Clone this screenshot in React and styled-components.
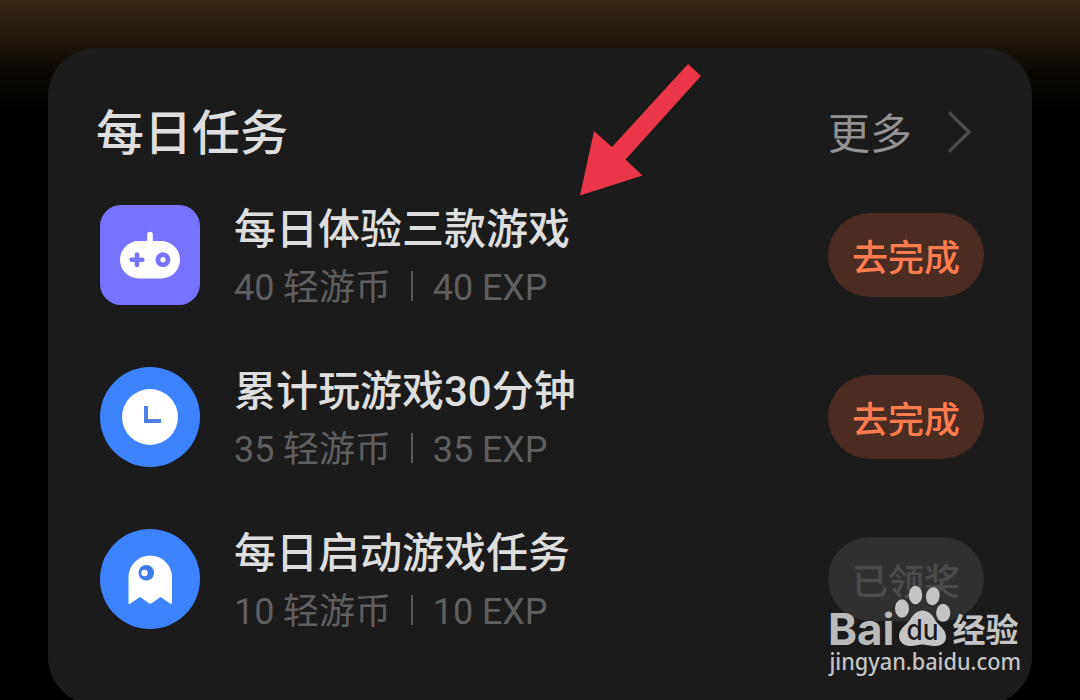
import styled, { createGlobalStyle } from "styled-components";

const tasks = [
  { icon: "gamepad", title: "每日体验三款游戏", coins: 40, exp: 40, done: false },
  { icon: "clock", title: "累计玩游戏30分钟", coins: 35, exp: 35, done: false },
  { icon: "ghost", title: "每日启动游戏任务", coins: 10, exp: 10, done: true },
];

const GamepadIcon = () => (
  <svg width="100" height="100" viewBox="0 0 100 100">
    <rect width="100" height="100" rx="21" fill="#7873ff" />
    <path d="M50 29.5V40" stroke="#fff" strokeWidth="5.6" strokeLinecap="round" />
    <rect x="20" y="36" width="60" height="37.5" rx="18.75" fill="#fff" />
    <path d="M37 49.5V60M31.7 54.7H42.3" stroke="#7873ff" strokeWidth="4.6" strokeLinecap="round" />
    <circle cx="63" cy="54.7" r="5" fill="none" stroke="#7873ff" strokeWidth="4.8" />
  </svg>
);

const ClockIcon = () => (
  <svg width="100" height="100" viewBox="0 0 100 100">
    <circle cx="50" cy="50" r="50" fill="#3d82ff" />
    <circle cx="50" cy="50" r="28" fill="#fff" />
    <path d="M46 39V54H61" fill="none" stroke="#4c80e2" strokeWidth="4" />
  </svg>
);

const GhostIcon = () => (
  <svg width="100" height="100" viewBox="0 0 100 100">
    <circle cx="50" cy="50" r="50" fill="#3d82ff" />
    <path
      d="M28.5 47A21.8 22 0 0 1 72 47V74Q72 75.5 70.5 74.7L60.5 68L52 74Q50.3 75 48.6 74L40 68L30 74.7Q28.5 75.5 28.5 74Z"
      fill="#fff"
    />
    <circle cx="46.3" cy="43.8" r="7.8" fill="#3f7ce8" />
    <circle cx="44.5" cy="44" r="3.2" fill="#fff" />
  </svg>
);

const icons = { gamepad: GamepadIcon, clock: ClockIcon, ghost: GhostIcon };

const Task = ({ task }) => {
  const Icon = icons[task.icon];
  return (
    <Row>
      <Icon />
      <Info>
        <TaskTitle>{task.title}</TaskTitle>
        <Reward>
          <Amount>{task.coins} 轻游币</Amount>
          <Divider />
          <Amount>{task.exp} EXP</Amount>
        </Reward>
      </Info>
      <ActionButton $done={task.done}>{task.done ? "已领奖" : "去完成"}</ActionButton>
    </Row>
  );
};

const App = () => {
  return (
    <Page>
      <GlobalStyle />
      <Card>
        <Header>
          <Heading>每日任务</Heading>
          <More>
            <MoreText>更多</MoreText>
            <svg width="26" height="42" viewBox="0 0 26 42">
              <path d="M2 1.5L22 21L2 40.5" fill="none" stroke="#4c4c4c" strokeWidth="3.4" />
            </svg>
          </More>
        </Header>
        <List>
          {tasks.map((task) => (
            <Task key={task.title} task={task} />
          ))}
        </List>
      </Card>

      <Arrow width="124" height="134" viewBox="0 0 124 134">
        <path d="M0 131.5L14 67L32 83L108 0L121 12L45.5 95.5L62.5 111.5Z" fill="#eb3549" />
      </Arrow>

      <Watermark width="220" height="115" viewBox="0 0 220 115">
        <g fill="#c4c4c4">
          <WordMark x="3" y="64.5" textLength="66.5" lengthAdjust="spacingAndGlyphs">Bai</WordMark>
          <ellipse cx="77" cy="28.5" rx="7" ry="9.3" />
          <ellipse cx="90.5" cy="15" rx="6.7" ry="9.2" />
          <ellipse cx="107.8" cy="16.2" rx="6.8" ry="9" transform="rotate(10 107.8 16.2)" />
          <ellipse cx="118.2" cy="32.8" rx="7.1" ry="9" />
          <path d="M97.5 30.5C103 30.5 107 34 110 40C114 46 121 49 121 57C121 63 116 66 110 66C105 66 101 64.5 97.5 64.5C94 64.5 90 66 85 66C79 66 74 62 74 56C74 49 81 45 85 40C88.5 34 92 30.5 97.5 30.5Z" />
          <DuText x="81.5" y="60" textLength="32" lengthAdjust="spacingAndGlyphs">du</DuText>
          <CnText x="127.5" y="61.5" textLength="66" lengthAdjust="spacingAndGlyphs">经验</CnText>
          <UrlText x="4.5" y="90" textLength="191.5" lengthAdjust="spacingAndGlyphs">jingyan.baidu.com</UrlText>
        </g>
      </Watermark>
    </Page>
  );
};

const GlobalStyle = createGlobalStyle`
  body {
    margin: 0;
    background: #000;
    overflow: hidden;
  }
`;

const Page = styled.div`
  position: relative;
  box-sizing: border-box;
  width: 1080px;
  height: 700px;
  padding: 48px 48px 0;
  overflow: hidden;
  background: linear-gradient(#382917 0, #1d140a 44px, #0b0803 72px, #000 116px);
  font-family: Roboto, "Noto Sans CJK SC", sans-serif;
`;

const Card = styled.div`
  box-sizing: border-box;
  height: 657px;
  padding: 52px 48px 0;
  border-radius: 48px;
  background: #1b1b1b;
`;

const Header = styled.div`
  display: flex;
  align-items: center;
  justify-content: space-between;
  height: 64px;
`;

const Heading = styled.h1`
  margin: 0;
  padding-top: 3px;
  font-size: 48px;
  font-weight: 500;
  line-height: 64px;
  color: #dedede;
`;

const More = styled.div`
  display: flex;
  align-items: center;
  gap: 35px;
  padding-right: 11px;
`;

const MoreText = styled.span`
  padding-top: 5px;
  font-size: 42px;
  line-height: 64px;
  color: #929292;
`;

const List = styled.div`
  display: flex;
  flex-direction: column;
  gap: 62px;
  padding: 41px 0 0 4px;
`;

const Row = styled.div`
  display: flex;
  align-items: center;
  height: 100px;
`;

const Info = styled.div`
  flex: 1;
  margin-left: 34px;
`;

const TaskTitle = styled.div`
  padding-top: 4px;
  font-size: 42px;
  font-weight: 500;
  line-height: 58px;
  color: #dedede;
`;

const Reward = styled.div`
  display: flex;
  align-items: center;
  height: 54px;
  color: #5f5f5f;
`;

const Amount = styled.span`
  padding-top: 4px;
  font-size: 36px;
  line-height: 54px;
  letter-spacing: -0.1px;
`;

const Divider = styled.i`
  width: 2px;
  height: 30px;
  margin: 0 20px;
  background: #5a5a5a;
`;

const ActionButton = styled.button`
  width: 156px;
  height: 84px;
  padding: 8px 0 0;
  border: none;
  border-radius: 42px;
  font-family: inherit;
  font-size: 36px;
  font-weight: 500;
  line-height: 76px;
  color: ${(props) => (props.$done ? "#4b4b4b" : "#ff7c4f")};
  background: ${(props) => (props.$done ? "#303030" : "#4a2c22")};
`;

const Arrow = styled.svg`
  position: absolute;
  left: 580px;
  top: 64px;
`;

const Watermark = styled.svg`
  position: absolute;
  left: 825px;
  top: 580px;
`;

const WordMark = styled.text`
  font: 700 44px Inter, sans-serif;
  fill: #bababa;
`;

const DuText = styled.text`
  font: 500 28px Inter, sans-serif;
  fill: #1b1b1b;
`;

const CnText = styled.text`
  font: 700 33px "Noto Sans CJK SC", sans-serif;
`;

const UrlText = styled.text`
  font: 500 23px "Noto Sans", sans-serif;
`;

export default App;
